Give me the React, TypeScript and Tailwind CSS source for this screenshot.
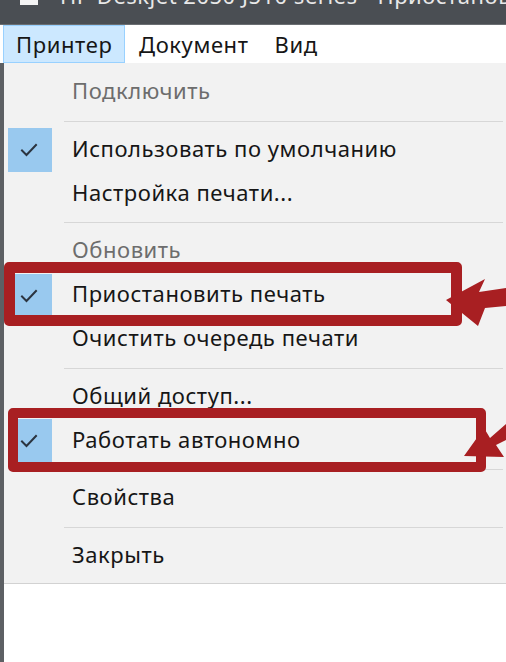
import React from "react";

type Item =
  | { kind: "item"; label: string; disabled?: boolean; checked?: boolean }
  | { kind: "sep" };

const MENU: Item[] = [
  { kind: "item", label: "Подключить", disabled: true },
  { kind: "sep" },
  { kind: "item", label: "Использовать по умолчанию", checked: true },
  { kind: "item", label: "Настройка печати..." },
  { kind: "sep" },
  { kind: "item", label: "Обновить", disabled: true },
  { kind: "item", label: "Приостановить печать", checked: true },
  { kind: "item", label: "Очистить очередь печати" },
  { kind: "sep" },
  { kind: "item", label: "Общий доступ..." },
  { kind: "item", label: "Работать автономно", checked: true },
  { kind: "sep" },
  { kind: "item", label: "Свойства" },
  { kind: "sep" },
  { kind: "item", label: "Закрыть" },
];

function Check() {
  return (
    <svg width="18" height="14" viewBox="0 0 18 14" fill="none">
      <path d="M2 7.5l4.5 4.5L16 2" stroke="#2b3440" strokeWidth="2" strokeLinecap="square" />
    </svg>
  );
}

export default function App() {
  return (
    <div className="relative w-[506px] h-[662px] overflow-hidden bg-white font-['Noto_Sans',sans-serif] text-[#161616]">
      {/* title bar, cut at the top */}
      <div className="h-[25px] bg-[#4a4e53] overflow-hidden flex items-start border-b border-[#6a6e72]">
        <div className="flex items-center gap-[22px] mt-[-17px] pl-[20px] whitespace-nowrap">
          <div className="w-[18px] h-[20px] bg-[#f4f4f4]" />
          <span className="text-[22px] leading-[24px] text-[#e8e8e8] tracking-[0.5px]">
            HP Deskjet 2050 J510 series - Приостановлено
          </span>
        </div>
      </div>

      {/* menu bar */}
      <div className="h-[38px] bg-white flex items-stretch text-[22px] tracking-[0.6px]">
        <div className="ml-[3px] w-[122px] bg-[#cce8ff] border border-[#99d1ff] flex items-center pl-[12px]">
          Принтер
        </div>
        <div className="flex items-center pl-[14px]">Документ</div>
        <div className="flex items-center pl-[26px]">Вид</div>
      </div>

      <div className="flex">
        <div className="w-[4px] h-[600px] bg-[#5d6064] shrink-0" />
        <div className="flex-1 flex flex-col">
          <div className="bg-[#f2f2f2] pt-[7.5px] pb-[5px] border-b border-[#d2d2d2] text-[22px] tracking-[0.55px]">
            {MENU.map((it, i) =>
              it.kind === "sep" ? (
                <div key={i} className="h-[13.5px] flex items-center pl-[60px] pr-[3px]">
                  <div className="h-px w-full bg-[#d7d7d7]" />
                </div>
              ) : (
                <div key={i} className="h-[44px] flex items-center">
                  <div className="w-[60px] h-full flex items-center shrink-0 pl-[4px]">
                    {it.checked && (
                      <div className="w-[44px] h-[44px] bg-[#99c9ef] flex items-center justify-center pr-[3px]">
                        <Check />
                      </div>
                    )}
                  </div>
                  <span
                    className={`pl-[8px] pb-[4px] whitespace-nowrap ${it.disabled ? "text-[#6d6d6d]" : "text-[#161616]"}`}
                  >
                    {it.label}
                  </span>
                </div>
              )
            )}
          </div>
        </div>
      </div>

      {/* red highlight frames */}
      <div className="absolute left-[4px] top-[262px] w-[458px] h-[64px] border-[11px] border-[#a81f22] rounded-[5px]" />
      <div className="absolute left-[8px] top-[408px] w-[478px] h-[64px] border-[10px] border-[#a81f22] rounded-[5px]" />

      {/* arrows */}
      <svg className="absolute left-0 top-0" width="506" height="662" viewBox="0 0 506 662">
        <polygon
          points="446,300 485,279 479,292 506,288 506,306 485,308 478,326"
          fill="#a81f22"
        />
        <polygon
          points="464,456 484,428 490,438 506,424 506,440 496,445 504,457"
          fill="#a81f22"
        />
      </svg>
    </div>
  );
}
